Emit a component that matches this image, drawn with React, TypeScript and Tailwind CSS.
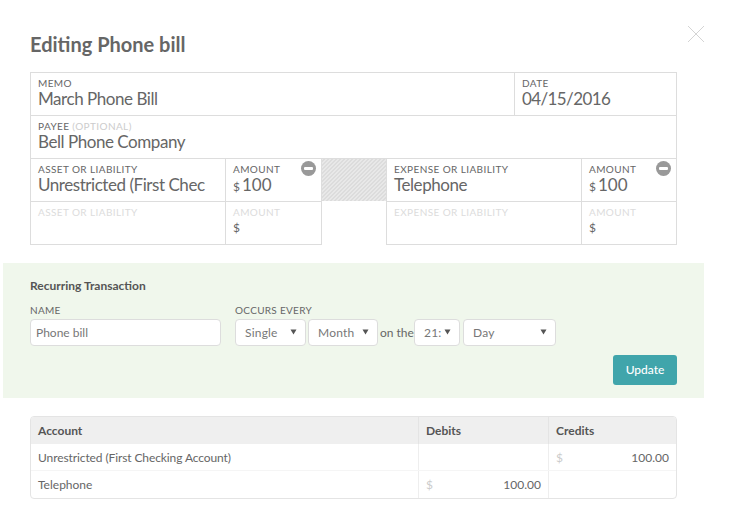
import React from 'react';

const font = { fontFamily: 'Lato, sans-serif' };

function Label({ children, faint }: { children: React.ReactNode; faint?: boolean }) {
  return (
    <div className={`text-[10px] leading-[13px] tracking-[0.4px] uppercase ${faint ? 'text-[#dcdcdc]' : 'text-[#666]'}`}>
      {children}
    </div>
  );
}

function Value({ children }: { children: React.ReactNode }) {
  return <div className="text-[17px] leading-[18px] tracking-[-0.45px] text-[#666]">{children}</div>;
}

function MinusBadge() {
  return (
    <span className="absolute right-[5px] top-[2px] w-[15px] h-[15px] rounded-full bg-[#999] flex items-center justify-center">
      <span className="block w-[9px] h-[3px] bg-white rounded-[1px]" />
    </span>
  );
}

function AmountCell({ value, removable, className }: { value?: string; removable?: boolean; className: string }) {
  return (
    <div className={`relative px-[7px] pt-[4px] ${className}`}>
      <Label faint={!value}>Amount</Label>
      <div className="flex items-baseline gap-[2px] text-[#666]">
        <span className="text-[12px] leading-[18px]">$</span>
        {value && <span className="text-[17px] leading-[18px]">{value}</span>}
      </div>
      {removable && <MinusBadge />}
    </div>
  );
}

function Caret() {
  return (
    <svg width="7" height="6" viewBox="0 0 7 6" className="absolute right-[8px] top-[9px]">
      <path d="M0.5 0.5h6L3.5 5.5z" fill="#555" />
    </svg>
  );
}

function Select({ label, width }: { label: string; width: string }) {
  return (
    <div className={`relative h-[27px] ${width} bg-white border border-[#ddd] rounded-[4px] pl-[9px] text-[12px] leading-[25px] text-[#777] tracking-[0.2px] overflow-hidden`}>
      {label}
      <Caret />
    </div>
  );
}

export default function App() {
  return (
    <div className="relative w-[729px] h-[527px] bg-white overflow-hidden" style={font}>
      <svg width="18" height="18" viewBox="0 0 18 18" className="absolute left-[687px] top-[25px]">
        <path d="M1 1l16 16M17 1L1 17" stroke="#d4d4d4" strokeWidth="1" fill="none" />
      </svg>

      <div className="px-[30px] pt-[32px]">
        <h1 className="text-[20px] leading-[25px] font-bold text-[#666] mb-[15px]">Editing Phone bill</h1>

        {/* Form table */}
        <div className="w-[647px]">
          <div className="border border-[#ddd] flex h-[44px]">
            <div className="flex-1 px-[7px] pt-[4px] border-r border-[#ddd]">
              <Label>Memo</Label>
              <Value>March Phone Bill</Value>
            </div>
            <div className="w-[161px] px-[7px] pt-[4px]">
              <Label>Date</Label>
              <div className="text-[17px] leading-[18px] tracking-[-0.6px] text-[#666]">04/15/2016</div>
            </div>
          </div>
          <div className="border-x border-b border-[#ddd] h-[43px] px-[7px] pt-[4px]">
            <Label>
              Payee <span className="text-[#ccc]">(Optional)</span>
            </Label>
            <Value>Bell Phone Company</Value>
          </div>

          <div className="flex">
            <div className="w-[292px]">
              <div className="flex h-[43px] border-x border-b border-[#ddd]">
                <div className="w-[195px] px-[7px] pt-[4px] border-r border-[#ddd] overflow-hidden whitespace-nowrap">
                  <Label>Asset or Liability</Label>
                  <Value>Unrestricted (First Chec</Value>
                </div>
                <AmountCell value="100" removable className="flex-1" />
              </div>
              <div className="flex h-[43px] border-x border-b border-[#ddd]">
                <div className="w-[195px] px-[7px] pt-[4px] border-r border-[#ddd]">
                  <Label faint>Asset or Liability</Label>
                </div>
                <AmountCell className="flex-1" />
              </div>
            </div>

            <div className="w-[64px] h-[42px] bg-[repeating-linear-gradient(135deg,#e8e8e8_0,#e8e8e8_1.414px,#dcdcdc_1.414px,#dcdcdc_2.828px)]" />

            <div className="w-[291px]">
              <div className="flex h-[43px] border-x border-b border-[#ddd]">
                <div className="w-[195px] px-[7px] pt-[4px] border-r border-[#ddd]">
                  <Label>Expense or Liability</Label>
                  <Value>Telephone</Value>
                </div>
                <AmountCell value="100" removable className="flex-1" />
              </div>
              <div className="flex h-[43px] border-x border-b border-[#ddd]">
                <div className="w-[195px] px-[7px] pt-[4px] border-r border-[#ddd]">
                  <Label faint>Expense or Liability</Label>
                </div>
                <AmountCell className="flex-1" />
              </div>
            </div>
          </div>
        </div>
      </div>

      {/* Recurring transaction */}
      <div className="ml-[3px] mt-[18px] w-[701px] h-[135px] bg-[#f0f7ec] pl-[27px] pr-[27px] pt-[15px]">
        <div className="text-[12px] leading-[16px] font-bold text-[#555]">Recurring Transaction</div>
        <div className="flex mt-[9px]">
          <div className="w-[205px]">
            <div className="text-[10px] leading-[14px] tracking-[0.3px] text-[#666] uppercase mb-[2px]">Name</div>
            <div className="h-[27px] w-[191px] bg-white border border-[#ddd] rounded-[4px] px-[5px] text-[12px] leading-[25px] text-[#777]">
              Phone bill
            </div>
          </div>
          <div>
            <div className="text-[10px] leading-[14px] tracking-[0.3px] text-[#666] uppercase mb-[2px]">Occurs every</div>
            <div className="flex items-center">
              <Select label="Single" width="w-[71px]" />
              <div className="w-[2px]" />
              <Select label="Month" width="w-[70px]" />
              <span className="text-[12px] text-[#666] mx-[2px] w-[32px] whitespace-nowrap">on the</span>
              <Select label="21:" width="w-[46px]" />
              <div className="w-[3px]" />
              <Select label="Day" width="w-[93px]" />
            </div>
          </div>
        </div>
        <div className="flex justify-end mt-[9px]">
          <button className="w-[64px] h-[30px] rounded-[3px] bg-[#40a5ab] text-white text-[12px] font-medium">Update</button>
        </div>
      </div>

      {/* Ledger */}
      <div className="ml-[30px] mt-[18px] w-[647px] border border-[#e4e4e4] rounded-[4px] overflow-hidden text-[12px] text-[#666]">
        <div className="flex h-[27px] bg-[#efefef] font-bold text-[#555] leading-[27px]">
          <div className="w-[387px] pl-[7px]">Account</div>
          <div className="w-[130px] pl-[7px] border-l border-[#e4e4e4]">Debits</div>
          <div className="flex-1 pl-[7px] border-l border-[#e4e4e4]">Credits</div>
        </div>
        <div className="flex h-[27px] leading-[27px] border-b border-[#f5f5f5]">
          <div className="w-[387px] pl-[7px] tracking-[-0.1px]">Unrestricted (First Checking Account)</div>
          <div className="w-[130px] border-l border-[#eee]" />
          <div className="flex-1 flex justify-between px-[7px] border-l border-[#eee]">
            <span className="text-[#ccc]">$</span>
            <span>100.00</span>
          </div>
        </div>
        <div className="flex h-[27px] leading-[28px]">
          <div className="w-[387px] pl-[7px]">Telephone</div>
          <div className="w-[130px] flex justify-between px-[7px] border-l border-[#eee]">
            <span className="text-[#ccc]">$</span>
            <span>100.00</span>
          </div>
          <div className="flex-1 border-l border-[#eee]" />
        </div>
      </div>
    </div>
  );
}
